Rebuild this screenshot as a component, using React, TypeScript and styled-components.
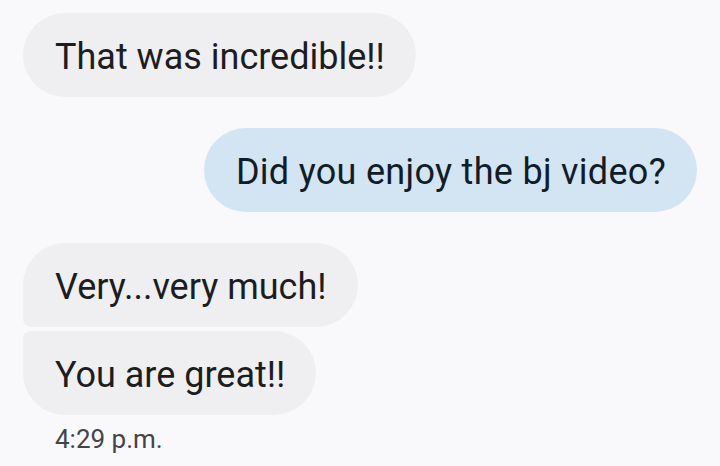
import React from "react";
import styled, { createGlobalStyle, css } from "styled-components";

const Global = createGlobalStyle`
  html, body { margin: 0; padding: 0; background: #f9f9fb; }
  body { font-family: Roboto, "Noto Sans", sans-serif; }
`;

const Thread = styled.div`
  display: flex;
  flex-direction: column;
  gap: 31px;
  padding: 13px 23px 0 23px;
  width: 720px;
  height: 466px;
  box-sizing: border-box;
  overflow: hidden;
`;

const Group = styled.div<{ $out?: boolean }>`
  display: flex;
  flex-direction: column;
  align-items: ${(p) => (p.$out ? "flex-end" : "flex-start")};
  gap: 4px;
`;

type Pos = "single" | "first" | "last";

const Bubble = styled.div<{ $out?: boolean; $pos: Pos }>`
  box-sizing: border-box;
  height: 84px;
  display: flex;
  align-items: center;
  padding: 3px 31px 0 32px;
  font-size: 36px;
  letter-spacing: ${(p) => (p.$out ? "0.3px" : "0")};
  border-radius: 42px;
  background: ${(p) => (p.$out ? "#d3e4f3" : "#efeff2")};
  color: ${(p) => (p.$out ? "#101c28" : "#1d1d1f")};
  ${(p) =>
    p.$pos === "first" &&
    css`
      border-bottom-left-radius: 8px;
    `}
  ${(p) =>
    p.$pos === "last" &&
    css`
      border-top-left-radius: 8px;
    `}
`;

const Time = styled.div`
  margin-top: 6px;
  padding-left: 32px;
  font-size: 26px;
  line-height: 28px;
  color: #444548;
`;

export default function App() {
  return (
    <>
      <Global />
      <Thread>
        <Group>
          <Bubble $pos="single">That was incredible!!</Bubble>
        </Group>
        <Group $out>
          <Bubble $out $pos="single">Did you enjoy the bj video?</Bubble>
        </Group>
        <Group>
          <Bubble $pos="first">Very...very much!</Bubble>
          <Bubble $pos="last">You are great!!</Bubble>
          <Time>4:29 p.m.</Time>
        </Group>
      </Thread>
    </>
  );
}
